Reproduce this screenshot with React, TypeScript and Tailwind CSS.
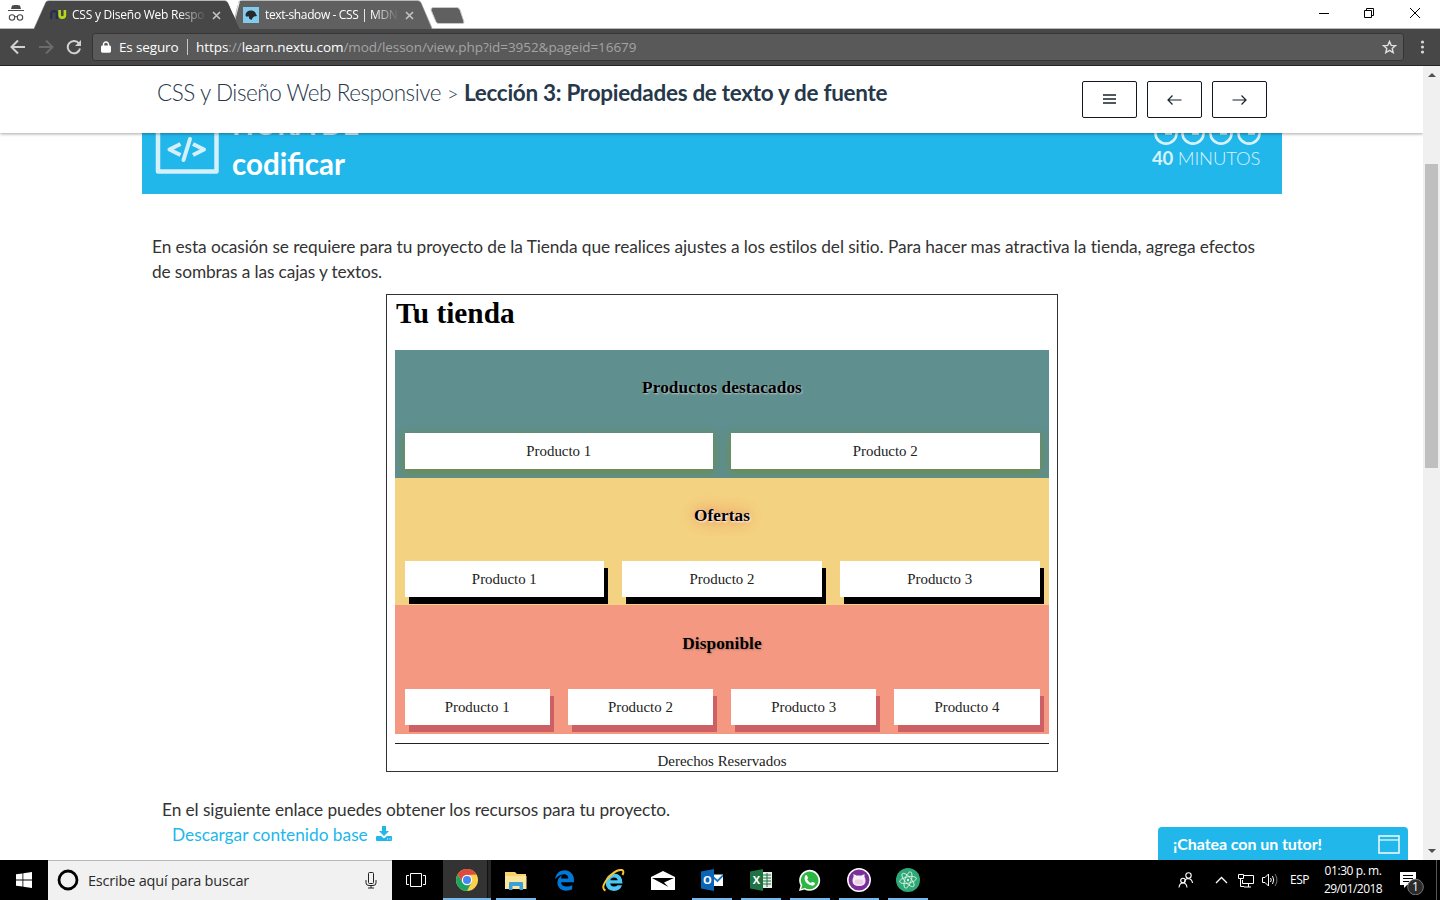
import type { ReactNode } from "react";
import { FaEdgeLegacy, FaLock } from "react-icons/fa6";

function TabStrip() {
  return (
    <div className="relative flex h-[29px] shrink-0 items-start bg-white font-['Open_Sans',sans-serif] text-[12px] text-white">
      <svg className="absolute left-0 top-0" width="480" height="29">
        <path d="M233 29 L238 3 Q239 0.500 242 0.500 H418 Q420 0.500 421 3 L432 28" fill="none" stroke="#b5b9b7" />
        <path d="M233 29 L240 1 H418 Q420 1 421 3 L432 29 Z" fill="#606060" />
        <path d="M0 28.500 H34 L46 2 Q47 0.500 49 0.500 H225 Q227 1 228 3 L239 28.500" fill="none" stroke="#b5b9b7" />
        <path d="M34 29 L46 2 Q47 1 49 1 H225 Q227 1 228 3 L240 29 Z" fill="#474747" />
        <path d="M228.500 3 L233.500 15 L238.500 3 L237 0 H227 Z" fill="#fff" />
        <path d="M433 7.500 H457 Q459 7.500 460 10 L464 22 Q464 23.500 462 23.500 H439 Q437 23.500 436 22 L431 10 Q431 7.500 433 7.500 Z" fill="#606060" stroke="#c5c8c6" />
        <path d="M432 28.500 H480" stroke="#b5b9b7" />
      </svg>
      <div className="absolute bottom-0 left-[480px] right-0 h-px bg-[#b5b9b7]" />
      <svg className="relative ml-[8px] mt-[5px]" width="16" height="16" viewBox="0 0 16 16">
        <path d="M4 0.500 L7 0 H9 L12 0.500 L13 4 H3 Z M0 5 H16 V6 H0 Z" fill="#4a4a4a" />
        <circle cx="4" cy="12.500" r="2.700" fill="none" stroke="#4a4a4a" strokeWidth="1.100" />
        <circle cx="12" cy="12.500" r="2.700" fill="none" stroke="#4a4a4a" strokeWidth="1.100" />
        <path d="M6.500 12 Q8 11 9.500 12" fill="none" stroke="#4a4a4a" />
      </svg>
      <svg className="relative ml-[26px] mt-[10px]" width="17" height="9" viewBox="0 0 17 9">
        <path d="M1.200 9 V3.500 Q1.200 1.200 4 1.200 Q6.800 1.200 6.800 3.500 V9" fill="none" stroke="#23304f" strokeWidth="2.200" />
        <path d="M9.600 0 V5 Q9.600 7.600 12.300 7.600 Q14.900 7.600 14.900 5 V0" fill="none" stroke="#b4d916" strokeWidth="2.600" />
      </svg>
      <div className="relative ml-[5px] mt-[6px] w-[133px] overflow-hidden whitespace-nowrap leading-[18px] tracking-[-0.24px] [mask-image:linear-gradient(to_right,#000_106px,transparent_135px)]">
        CSS y Diseño Web Respo
      </div>
      <svg className="relative ml-[7px] mt-[11px]" width="9" height="9"><path d="M1 1 L8 8 M8 1 L1 8" stroke="#c4c4c4" strokeWidth="1.600" /></svg>
      <svg className="relative ml-[22px] mt-[7px]" width="16" height="16">
        <rect width="16" height="16" fill="#83cbec" />
        <path d="M2.500 8 Q3 4 7 3.500 Q12 3 13 7 L14 9 L11 9.500 L9.500 11 L8.500 13 L6 11.500 L6 9.500 L3 9.500 Z" fill="#252a2c" />
      </svg>
      <div className="relative ml-[6px] mt-[6px] w-[132px] overflow-hidden whitespace-nowrap leading-[18px] tracking-[-0.38px] [mask-image:linear-gradient(to_right,#000_108px,transparent_134px)]">
        text-shadow - CSS | MDN
      </div>
      <svg className="relative ml-[8px] mt-[11px]" width="9" height="9"><path d="M1 1 L8 8 M8 1 L1 8" stroke="#c4c4c4" strokeWidth="1.600" /></svg>
      <svg className="relative ml-auto mr-[18px] mt-[7px]" width="104" height="12" fill="none" stroke="#000">
        <path d="M1 6.500 H11 M46.500 3.500 H53.500 V10.500 H46.500 Z M48.500 3.500 V1.500 H55.500 V8.500 H53.500 M92 1 L102 11 M102 1 L92 11" />
      </svg>
    </div>
  );
}

function Toolbar() {
  return (
    <div className="flex h-[37px] shrink-0 items-center border-b border-[#252525] bg-[#474747] font-['Open_Sans',sans-serif] text-[13.5px] text-white">
      <svg className="ml-[10px]" width="72" height="16" viewBox="0 0 72 16" fill="none" strokeWidth="2">
        <path d="M15 8 H2 M8 1.500 L1.500 8 L8 14.500" stroke="#d2d2d2" />
        <path d="M29 8 H42 M36 1.500 L42.500 8 L36 14.500" stroke="#6b6b6b" />
        <path d="M69 4.500 A6.200 6.200 0 1 0 70 9.500" stroke="#d2d2d2" />
        <path d="M71 1 V7 H65 Z" fill="#d2d2d2" />
      </svg>
      <div className="ml-[10px] flex h-[28px] w-[1312px] items-center rounded-[3px] border border-[#353535] bg-[#595959]">
        <FaLock className="ml-[8px] h-[12px] w-[10px]" />
        <span className="ml-[8px] w-[60px] whitespace-nowrap tracking-[-0.15px]">Es seguro</span>
        <span className="ml-[8px] h-4 w-px bg-[#c8c8c8]" />
        <span className="ml-[8px] whitespace-nowrap tracking-[-0.05px] text-[#a4a4a4]">
          <span className="text-white">https</span>://<span className="text-white">learn.nextu.com</span>/mod/lesson/view.php?id=3952&amp;pageid=16679
        </span>
        <svg className="ml-auto mr-[6px]" width="15" height="14" viewBox="0 0 15 14"><path d="M7.500 1.500 L9.200 5.400 L13.400 5.700 L10.200 8.400 L11.200 12.600 L7.500 10.300 L3.800 12.600 L4.800 8.400 L1.600 5.700 L5.800 5.400 Z" fill="none" stroke="#e0e0e0" strokeWidth="1.400" /></svg>
      </div>
      <svg className="ml-[16px]" width="5" height="14" fill="#d8d8d8"><circle cx="2.500" cy="2" r="1.600" /><circle cx="2.500" cy="7" r="1.600" /><circle cx="2.500" cy="12" r="1.600" /></svg>
    </div>
  );
}

function NavButton({ children }: { children: ReactNode }) {
  return (
    <button className="flex h-[37px] w-[55px] items-center justify-center rounded-[2px] border border-[#111820] bg-white">
      <svg width="15" height="11" viewBox="0 0 15 11" fill="none" stroke="#17222b" strokeWidth="1.200">{children}</svg>
    </button>
  );
}

function LessonHeader() {
  return (
    <header className="relative z-10 flex h-[67px] shrink-0 items-start bg-white pl-[157px] shadow-[0_1px_3px_rgba(0,0,0,0.35)]">
      <h1 className="flex whitespace-nowrap pt-[12px] text-[22.5px] leading-[30px] text-[#26384a]">
        <span className="flex w-[307px] gap-[6px] font-light tracking-[-0.45px]"><span>CSS y Diseño Web Responsive</span><span className="text-[20px]">&gt;</span></span>
        <b className="font-bold tracking-[-0.3px]">Lección 3: Propiedades de texto y de fuente</b>
      </h1>
      <nav className="ml-auto mr-[156px] mt-[15px] flex gap-[10px]">
        <NavButton><path d="M1 1 H14 M1 5 H14 M1 9 H14" strokeWidth="1.500" /></NavButton>
        <NavButton><path d="M1 6 H14.500 M5.500 1.500 L1 6 L5.500 10.500" /></NavButton>
        <NavButton><path d="M0.500 6 H14 M9.500 1.500 L14 6 L9.500 10.500" /></NavButton>
      </nav>
    </header>
  );
}

function Banner() {
  return (
    <div className="ml-[142px] flex h-[61px] w-[1140px] shrink-0 items-start overflow-hidden bg-[#22b7eb]">
      <svg className="ml-[13px]" width="66" height="42" viewBox="0 0 66 42" fill="none" stroke="#d3f0fb" strokeLinejoin="round">
        <path d="M3 -5 V38.500 H61.500 V-5" strokeWidth="4.500" />
        <path d="M25.500 11 L14.500 16.500 L25.500 22 M38 11 L49 16.500 L38 22" strokeWidth="4" />
        <path d="M35 6 L28.500 27" strokeWidth="4" strokeLinecap="round" />
      </svg>
      <div className="-mt-[26px] ml-[11px] whitespace-nowrap font-bold leading-[38px] text-white">
        <div className="h-[38px] text-[28.5px] leading-[35px] text-[#d8f2fc]">HORA DE</div>
        <div className="text-[29.5px]">codificar</div>
      </div>
      <div className="ml-auto mr-[20px] flex w-[110px] flex-col">
        <svg width="110" height="13" fill="none" stroke="#d8f2fc" strokeWidth="2.600">
          {[14, 41, 69, 97].map((x) => <g key={x}><circle cx={x} cy="0" r="10.600" /><path d={`M${x - 1} 0.500 H${x + 6}`} strokeWidth="2.400" /></g>)}
        </svg>
        <div className="whitespace-nowrap text-[18.5px] leading-[24px] tracking-[-0.15px] text-[#d8f2fc]"><b>40</b> <span className="font-light">MINUTOS</span></div>
      </div>
    </div>
  );
}

type SectionProps = { title: string; count: number; band: string; box: string; titleStyle: string };

function Section({ title, count, band, box, titleStyle }: SectionProps) {
  return (
    <section className={`flex flex-col px-[9.500px] ${band}`}>
      <h2 className={`text-center text-[17.3px] font-bold leading-[23px] tracking-[0.06px] text-black ${titleStyle}`}>{title}</h2>
      <div className="mt-[34px] flex gap-[18px]">
        {Array.from({ length: count }, (_, i) => (
          <div key={i} className={`h-[36px] flex-1 bg-white text-center text-[14.9px] leading-[36px] text-[#222] ${box}`}>Producto {i + 1}</div>
        ))}
      </div>
    </section>
  );
}

function Shop() {
  return (
    <div className="ml-[386px] mt-[10px] flex h-[478px] w-[672px] shrink-0 flex-col border border-[#333] bg-white px-[8px] font-['Liberation_Serif',serif]">
      <h1 className="h-[55px] pl-px text-[29.3px] font-bold leading-[36px] text-black">Tu tienda</h1>
      <Section title="Productos destacados" count={2} band="h-[128px] bg-[#5f8f8e] pt-[26px]" box="shadow-[0_3px_8px_1px_rgba(110,140,60,0.8)]" titleStyle="[text-shadow:1px_1px_2px_#c0c8c8]" />
      <Section title="Ofertas" count={3} band="h-[127px] bg-[#f3d382] pt-[26px]" box="shadow-[4px_7px_0_#000]" titleStyle="[text-shadow:1px_1px_2px_#fff,0_0_16px_#e96b50,0_0_5px_#efb27c]" />
      <Section title="Disponible" count={4} band="h-[129px] bg-[#f49881] pt-[27px]" box="shadow-[4px_7px_0_#cd6065]" titleStyle="[text-shadow:1px_1px_2px_#b97868]" />
      <footer className="mt-[9px] border-t border-[#222] pt-[7px] text-center text-[14.950px] leading-[20px] text-[#222]">Derechos Reservados</footer>
    </div>
  );
}

function Lesson() {
  return (
    <div className="relative flex h-[794px] w-[1423px] shrink-0 flex-col overflow-hidden bg-white font-['Lato',sans-serif]">
      <LessonHeader />
      <Banner />
      <p className="ml-[152px] mt-[40px] whitespace-nowrap text-[17.300px] leading-[25px] tracking-[-0.085px] text-[#333]">
        En esta ocasión se requiere para tu proyecto de la Tienda que realices ajustes a los estilos del sitio. Para hacer mas atractiva la tienda, agrega efectos<br />
        <span className="tracking-[-0.12px]">de sombras a las cajas y textos.</span>
      </p>
      <Shop />
      <div className="ml-[162px] mt-[25px] whitespace-nowrap text-[17.300px] leading-[25px] text-[#333]">
        <div className="tracking-[-0.077px]">En el siguiente enlace puedes obtener los recursos para tu proyecto.</div>
        <a className="ml-[10px] flex items-center text-[#22b7eb]">
          Descargar contenido base
          <svg className="-mt-[2px] ml-[8px]" width="16" height="15" viewBox="0 0 16 15" fill="currentColor">
            <path d="M6 0 H10 V5 H13 L8 10 L3 5 H6 Z" />
            <path fillRule="evenodd" d="M1 10 H5.200 L6.700 11.500 Q8 12.500 9.300 11.500 L10.800 10 H15 Q16 10 16 11 V14 Q16 15 15 15 H1 Q0 15 0 14 V11 Q0 10 1 10 Z M11 12.500 V13.500 H12 V12.500 Z M13.500 12.500 V13.500 H14.500 V12.500 Z" />
          </svg>
        </a>
      </div>
      <div className="absolute bottom-0 left-[1158px] flex h-[33px] w-[250px] items-center rounded-t-[4px] bg-[#22b7eb] pl-[15px] text-[16px] font-bold tracking-[-0.07px] text-white">
        ¡Chatea con un tutor!
        <svg className="ml-auto mr-[8px] mt-px" width="22" height="19" fill="none" stroke="#e8f8fe"><rect x="1" y="1" width="20" height="17" strokeWidth="1.600" /><path d="M1 5 H21" strokeWidth="1.300" /></svg>
      </div>
    </div>
  );
}

function Scrollbar() {
  return (
    <div className="flex w-[17px] flex-col items-center bg-[#f0f0f0]">
      <svg className="mt-[7px]" width="8" height="4"><path d="M0 4 L4 0 L8 4 Z" fill="#505050" /></svg>
      <div className="mt-[87px] h-[304px] w-[13px] bg-[#bfbfbf]" />
      <svg className="mb-[7px] mt-auto" width="8" height="4"><path d="M0 0 L4 4 L8 0 Z" fill="#505050" /></svg>
    </div>
  );
}

function Slot({ children, open = true }: { children: ReactNode; open?: boolean }) {
  return (
    <div className="flex w-[49px] flex-col items-center">
      <div className="flex h-[38px] items-center justify-center pt-[2px]">{children}</div>
      {open && <div className="h-[2px] w-[40px] bg-[#76b9ed]" />}
    </div>
  );
}

function OfficeIcon({ letter, color, children }: { letter: string; color: string; children: ReactNode }) {
  return (
    <svg width="22" height="22" viewBox="0 0 22 22">
      {children}
      <path d="M0 2.500 L13 0 V22 L0 19.500 Z" fill={color} />
      <text x="6.300" y="15" textAnchor="middle" fill="#fff" fontFamily="Open Sans" fontWeight="700" fontSize="11">{letter}</text>
    </svg>
  );
}

function Taskbar() {
  return (
    <div className="flex h-[40px] shrink-0 bg-black font-['Open_Sans',sans-serif] text-white">
      <div className="flex w-[48px] items-center justify-center">
        <svg width="16" height="16" viewBox="0 0 16 16" fill="#fff"><path d="M0 2.300 L6.500 1.400 V7.500 H0 Z M7.300 1.300 L16 0 V7.500 H7.300 Z M0 8.400 H6.500 V14.600 L0 13.700 Z M7.300 8.400 H16 V16 L7.300 14.700 Z" /></svg>
      </div>
      <div className="flex w-[344px] items-center border-t border-[#b8b8b8] bg-[#f1f1f1] pl-[9px] text-[14.500px] text-[#2b2b2b]">
        <svg className="-mt-px" width="22" height="22"><circle cx="11" cy="11" r="9" fill="none" stroke="#000" strokeWidth="2.800" /></svg>
        <span className="ml-[9px] whitespace-nowrap tracking-[-0.2px]">Escribe aquí para buscar</span>
        <svg className="ml-auto mr-[15px]" width="12" height="17" fill="none" stroke="#222"><rect x="3.500" y="0.500" width="5" height="11" rx="1" /><path d="M1 8 V11 Q1 13.500 4 13.500 H8 Q11 13.500 11 11 V8 M6 14 V16 M3 16 H9" /></svg>
      </div>
      <div className="flex w-[51px] items-center justify-center">
        <svg className="-ml-[3px]" width="20" height="14" fill="none" stroke="#fff"><path d="M4.500 0.500 H15.500 V13.500 H4.500 Z M3 2.500 H0.500 V11.500 H3 M17 2.500 H19.500 V11.500 H17" /></svg>
      </div>
      <div className="flex w-[48px] flex-col items-center border-b-2 border-[#76b9ed] bg-[linear-gradient(to_right,#333_44px,#111_44px,#111_45px,#262626_45px)]">
        <svg className="mt-[9px]" width="22" height="22" viewBox="-11 -11 22 22">
          <circle r="11" fill="#fdd14a" />
          <path d="M-9.500 -5.500 A11 11 0 0 1 9.500 -5.500 L0 -5 L-4.500 2.500 Z" fill="#dc4b3e" />
          <path d="M-9.500 -5.500 A11 11 0 0 0 0 11 L4.500 2.500 L-4.500 2.500 Z" fill="#1da462" />
          <circle r="5.200" fill="#fff" /><circle r="4" fill="#4688f1" />
        </svg>
      </div>
      <div className="flex">
        <Slot><svg width="22" height="19"><path d="M0 1 H10 L12 3 H21 V18 H0 Z" fill="#f9d46c" /><path d="M0 5 H21.500 V18 H0 Z" fill="#fde69a" /><path d="M4 19 V12 Q4 11 5 11 H17 Q18 11 18 12 V19 H14.500 V15 H7.500 V19 Z" fill="#38a1db" /></svg></Slot>
        <Slot open={false}><FaEdgeLegacy className="size-[21px] text-[#0078d7]" /></Slot>
        <Slot open={false}>
          <svg width="23" height="23" viewBox="0 0 23 23">
            <path d="M20.500 14.500 H8.300 Q8.500 17.500 12 17.500 Q14.500 17.500 15.500 16.300 H20 Q18 22 12 22 Q4 21.500 3.500 13.500 Q4 5 12 4.500 Q20.500 5 20.500 14.500 Z M8.300 11.300 H15.700 Q15.200 8.500 12 8.500 Q9 8.500 8.300 11.300 Z" fill="#4cc6f2" fillRule="evenodd" />
            <path d="M3.500 21.500 Q-2 19 6 9 Q14 0 20 1 Q22.500 2 20.500 6" fill="none" stroke="#f6c431" strokeWidth="2" />
          </svg>
        </Slot>
        <Slot open={false}><svg width="24" height="19"><path d="M0 6 L12 0 L24 6 V19 H0 Z" fill="#fff" /><path d="M1 7 H23 L13 11.500 L17.500 16 Z" fill="#000" /></svg></Slot>
        <Slot><OfficeIcon letter="O" color="#0a64b8"><path d="M12 5.500 H22 V17 H12 Z" fill="#fff" /><path d="M12 8 L16.500 12 L22 6.500" fill="none" stroke="#1675c8" strokeWidth="1.800" /></OfficeIcon></Slot>
        <Slot><OfficeIcon letter="X" color="#1f7244"><path d="M12 3 H22 V19 H12 Z" fill="#e7f2eb" /><path d="M13 6 H21 M13 9 H21 M13 12 H21 M13 15 H21 M17 4 V18" stroke="#207245" /></OfficeIcon></Slot>
        <Slot><svg width="23" height="23" viewBox="0 0 23 23"><path d="M1 22 L2.500 16.500 A10.500 10.500 0 1 1 6.500 20.500 Z" fill="#fff" /><path d="M3 20 L4.300 16.300 A8.800 8.800 0 1 1 7 18.900 Z" fill="#2cb742" /><path d="M7 7 Q8 5.500 9 6.500 L10 9 L9.200 10.500 Q10.500 13 13 14 L14.300 12.700 L17 14 Q17 16.500 14.500 16.800 Q7 15.500 6.500 9.500 Z" fill="#fff" /></svg></Slot>
        <Slot><svg width="24" height="24" viewBox="0 0 24 24"><circle cx="12" cy="12" r="11.200" fill="#7b2f9b" stroke="#fff" strokeWidth="1.500" /><path d="M5.500 13 Q5.500 10 6.500 9 L6.500 6 L9.500 7.500 H14.500 L17.500 6 V9 Q18.500 10 18.500 13 Q18.500 18 12 18 Q5.500 18 5.500 13 Z" fill="#f7eef6" /><rect x="7.500" y="11.500" width="9" height="5" rx="2.500" fill="#e9cfe6" /></svg></Slot>
        <Slot><svg width="24" height="24" viewBox="-12 -12 24 24"><circle r="12" fill="#2fa877" /><g fill="none" stroke="#d5f2e4" strokeWidth="0.900"><ellipse rx="8.500" ry="3.200" transform="rotate(-12)" /><ellipse rx="8.500" ry="3.200" transform="rotate(48)" /><ellipse rx="8.500" ry="3.200" transform="rotate(108)" /></g><circle r="1.200" fill="#e6fff2" /></svg></Slot>
      </div>
      <div className="ml-auto flex items-center">
        <svg width="16" height="17" viewBox="0 0 16 17" fill="none" stroke="#fff" strokeWidth="1.100"><circle cx="10.500" cy="3.500" r="2.700" /><path d="M6.500 10 Q7 6.500 10.500 6.500 Q14 7 14.500 11" /><circle cx="5" cy="8.500" r="2.300" /><path d="M1 15.500 Q1.500 11 5 11 Q8.500 11 9 15.500" /></svg>
        <svg className="ml-[21px]" width="13" height="8" fill="none" stroke="#fff" strokeWidth="1.300"><path d="M1 7 L6.500 1.500 L12 7" /></svg>
        <svg className="ml-[10px] mt-[2px]" width="17" height="14" fill="none" stroke="#fff"><path d="M6 1.500 H15.500 V9.500 H4.500 V6 M10.500 10 V13 M6 13 H13 M0.500 0.500 H5.500 V4.500 H0.500 Z M2.500 5 V12.500 H6" /></svg>
        <svg className="ml-[7px]" width="17" height="14" fill="none" stroke="#fff"><path d="M0.500 4.500 H3 L6.500 1 V13 L3 9.500 H0.500 Z M8.500 5 Q10 7 8.500 9 M10.500 3 Q13 7 10.500 11" /><path d="M13 1 Q17 7 13 13" stroke="#777" /></svg>
        <span className="ml-[11px] w-[19px] text-[12px] tracking-[-0.5px]">ESP</span>
        <div className="ml-[14px] w-[60px] whitespace-nowrap text-center text-[12px] leading-[18px] tracking-[-0.42px]"><div>01:30 p. m.</div><div className="tracking-[-0.55px]">29/01/2018</div></div>
        <svg className="ml-[17px] mt-[4px]" width="25" height="25"><path d="M0 2 H16 V15 H7 L4 18 V15 H0 Z" fill="#fff" /><path d="M3 5.500 H13 M3 8.500 H13 M3 11.500 H9" stroke="#000" /><circle cx="15.500" cy="17" r="7.800" fill="#2b2b2b" stroke="#777" /><text x="15.500" y="21.200" textAnchor="middle" fill="#fff" fontSize="12" fontFamily="Open Sans">1</text></svg>
        <div className="ml-[11px] mr-[3px] h-full w-px bg-[#555]" />
      </div>
    </div>
  );
}

export default function App() {
  return (
    <div className="flex h-[900px] w-[1440px] flex-col overflow-hidden bg-white">
      <TabStrip />
      <Toolbar />
      <div className="flex h-[794px] shrink-0"><Lesson /><Scrollbar /></div>
      <Taskbar />
    </div>
  );
}
